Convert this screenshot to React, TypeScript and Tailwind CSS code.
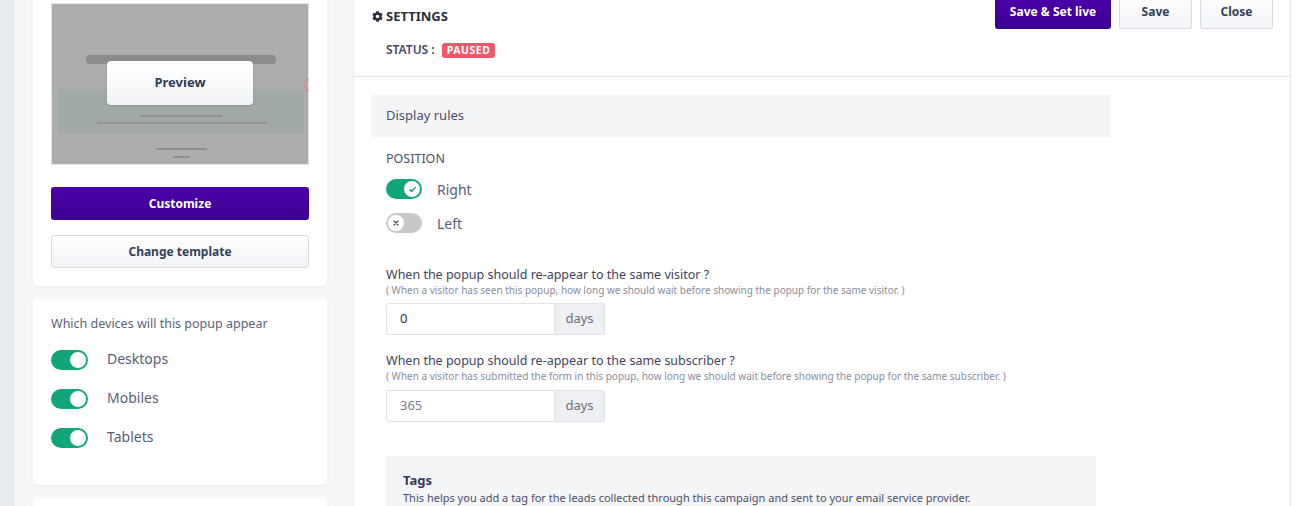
import { FaCog } from "react-icons/fa";

const font = { fontFamily: '"Noto Sans", "Open Sans", sans-serif' };

function Toggle({ on, mark = false, w = 37 }: { on: boolean; mark?: boolean; w?: number }) {
  return (
    <div
      className={`relative h-[20px] shrink-0 rounded-full ${on ? "bg-[#12a57c]" : "bg-[#c9c9c9]"}`}
      style={{ width: w }}
    >
      <div
        className={`absolute top-[1px] flex h-[18px] w-[18px] items-center justify-center rounded-full border bg-white ${
          on ? "right-[1px] border-[#12a57c]" : "left-[1px] border-[#c9c9c9]"
        }`}
      >
        {mark && on && (
          <svg width="9" height="9" viewBox="0 0 10 10" fill="none" stroke="#12a57c" strokeWidth="1.6" strokeLinecap="round" strokeLinejoin="round">
            <path d="M2 5.3l2 2 4-4.4" />
          </svg>
        )}
        {mark && !on && (
          <svg width="8" height="8" viewBox="0 0 10 10" fill="none" stroke="#4b4f6b" strokeWidth="1.6" strokeLinecap="round">
            <path d="M2.5 2.5l5 5M7.5 2.5l-5 5" />
          </svg>
        )}
      </div>
    </div>
  );
}

function PreviewThumb() {
  return (
    <div className="relative h-[162px] border border-[#e2e4e8] bg-[#adadad]">
      <div className="absolute left-[34px] top-[51px] h-[9px] w-[190px] rounded-sm bg-[#8c8c8c]" />
      <div className="absolute left-[6px] top-[85px] h-[45px] w-[246px] bg-[#a1aaa6]" />
      <div className="absolute left-[88px] top-[111px] h-[2px] w-[82px] bg-[#8f9591]" />
      <div className="absolute left-[45px] top-[118px] h-[2px] w-[170px] bg-[#8f9591]" />
      <div className="absolute left-[104px] top-[144px] h-[2px] w-[51px] bg-[#8f8f8f]" />
      <div className="absolute left-[121px] top-[152px] h-[2px] w-[17px] bg-[#8f8f8f]" />
      <svg className="absolute right-[-1px] top-[74px]" width="7" height="14" viewBox="0 0 7 14" fill="none" stroke="#d98a8a" strokeWidth="1.5">
        <path d="M6.5 1L1.5 7 6.5 13" />
      </svg>
      <div className="absolute left-[55px] top-[57px] flex h-[44px] w-[146px] items-center justify-center rounded-[4px] bg-gradient-to-b from-white to-[#f1f3f6] text-[13px] font-bold text-[#2d3d58] shadow-sm">
        Preview
      </div>
    </div>
  );
}

function DaysInput({ value, muted }: { value: string; muted?: boolean }) {
  return (
    <div className="flex h-[32px] w-[219px]">
      <div
        className={`flex flex-1 items-center rounded-l-[3px] border border-[#dfe2e7] pl-[13px] text-[13px] ${
          muted ? "text-[#7c7f92]" : "text-[#2f3346]"
        }`}
      >
        {value}
      </div>
      <div className="flex w-[50px] items-center justify-center rounded-r-[3px] border border-l-0 border-[#dfe2e7] bg-[#eef0f3] text-[13px] text-[#6a6d82]">
        days
      </div>
    </div>
  );
}

export default function App() {
  return (
    <div className="flex h-[506px] w-[1305px] overflow-hidden bg-white text-[#4b4f6b]" style={font}>
      <div className="w-[15px] shrink-0 bg-[#e8ebef]" />

      {/* left column */}
      <aside className="flex w-[338px] shrink-0 flex-col gap-[13px] bg-[#f7f8fa] pl-[18px] pr-[26px]">
        <div className="-mt-[15px] shrink-0 rounded-[5px] bg-white p-[18px] shadow-[0_1px_3px_rgba(0,0,0,0.06)]">
          <PreviewThumb />
          <button className="mt-[22px] flex h-[33px] w-full items-center justify-center rounded-[3px] bg-gradient-to-b from-[#4c00aa] to-[#3a0090] text-[12px] font-bold text-white">
            Customize
          </button>
          <button className="mt-[15px] flex h-[33px] w-full items-center justify-center rounded-[3px] border border-[#d6dce4] bg-gradient-to-b from-white to-[#f2f4f7] text-[12px] font-bold text-[#34405a]">
            Change template
          </button>
        </div>

        <div className="h-[186px] shrink-0 rounded-[5px] bg-white px-[18px] pt-[16px] shadow-[0_1px_3px_rgba(0,0,0,0.06)]">
          <p className="text-[12.5px] text-[#5c5f7b]">Which devices will this popup appear</p>
          <div className="mt-[16px] flex flex-col gap-[19px]">
            {["Desktops", "Mobiles", "Tablets"].map((d) => (
              <div key={d} className="flex items-center gap-[19px]">
                <Toggle on />
                <span className="-mt-[3px] text-[14px] text-[#5a5d79]">{d}</span>
              </div>
            ))}
          </div>
        </div>

        <div className="h-[40px] shrink-0 rounded-[5px] bg-white shadow-[0_1px_3px_rgba(0,0,0,0.06)]" />
      </aside>

      {/* settings panel */}
      <main className="w-[938px] shrink-0 border-x border-[#e6e8ec] bg-white">
        <header className="flow-root h-[77px] border-b border-[#e1e3e7] pl-[18px] pr-[17px]">
          <div className="-mt-[5px] flex items-start justify-between">
            <div className="mt-[12px] flex items-center gap-[3px] text-[13px] font-bold text-[#2c2f40]">
              <FaCog className="h-[11px] w-[11px]" />
              SETTINGS
            </div>
            <div className="flex gap-[8px]">
              <button className="h-[34px] w-[116px] rounded-b-[3px] bg-gradient-to-b from-[#4c00aa] to-[#3a0090] text-[12px] font-bold text-white">
                Save &amp; Set live
              </button>
              <button className="h-[34px] w-[73px] rounded-b-[3px] border border-t-0 border-[#d6dce4] bg-gradient-to-b from-white to-[#f2f4f7] text-[12px] font-bold text-[#34405a]">
                Save
              </button>
              <button className="h-[34px] w-[73px] rounded-b-[3px] border border-t-0 border-[#d6dce4] bg-gradient-to-b from-white to-[#f2f4f7] text-[12px] font-bold text-[#34405a]">
                Close
              </button>
            </div>
          </div>
          <div className="ml-[14px] mt-[12px] flex items-center gap-[7px] text-[12px] font-semibold text-[#434864]">
            STATUS :
            <span className="rounded-[3px] bg-[#f6566b] px-[5px] py-[1px] text-[10.5px] font-bold leading-[13px] tracking-wider text-white">
              PAUSED
            </span>
          </div>
        </header>

        <div className="pl-[17px] pt-[18px]">
          <div className="flex h-[42px] w-[739px] items-center bg-[#f4f5f7] pl-[15px] text-[13px] text-[#4b4f6b]">
            Display rules
          </div>

          <div className="pl-[15px]">
            <p className="mt-[13px] text-[12.5px] text-[#4b4f6b]">POSITION</p>
            <div className="mt-[10px] flex items-center gap-[15px]">
              <Toggle on mark w={36} />
              <span className="text-[14px] text-[#5a5d79]">Right</span>
            </div>
            <div className="mt-[13px] flex items-center gap-[15px]">
              <Toggle on={false} mark w={36} />
              <span className="text-[14px] text-[#5a5d79]">Left</span>
            </div>

            <p className="mt-[32px] text-[12.5px] leading-[17px] text-[#3f4360]">
              When the popup should re-appear to the same visitor ?
            </p>
            <p className="text-[10px] leading-[14px] text-[#8a8da0]">
              ( When a visitor has seen this popup, how long we should wait before showing the popup for the same visitor. )
            </p>
            <div className="mt-[6px]">
              <DaysInput value="0" />
            </div>

            <p className="mt-[17px] text-[12.5px] leading-[17px] text-[#3f4360]">
              When the popup should re-appear to the same subscriber ?
            </p>
            <p className="text-[10px] leading-[14px] text-[#8a8da0]">
              ( When a visitor has submitted the form in this popup, how long we should wait before showing the popup for the same subscriber. )
            </p>
            <div className="mt-[7px]">
              <DaysInput value="365" muted />
            </div>

            <section className="mt-[34px] h-[60px] w-[710px] bg-[#f4f5f7] px-[17px] pt-[15px]">
              <h3 className="text-[13px] font-bold leading-[18px] text-[#34385a]">Tags</h3>
              <p className="mt-[1px] text-[11px] leading-[15px] text-[#4b4f6b]">
                This helps you add a tag for the leads collected through this campaign and sent to your email service provider.
              </p>
            </section>
          </div>
        </div>
      </main>

      <div className="flex-1 bg-white" />
    </div>
  );
}
